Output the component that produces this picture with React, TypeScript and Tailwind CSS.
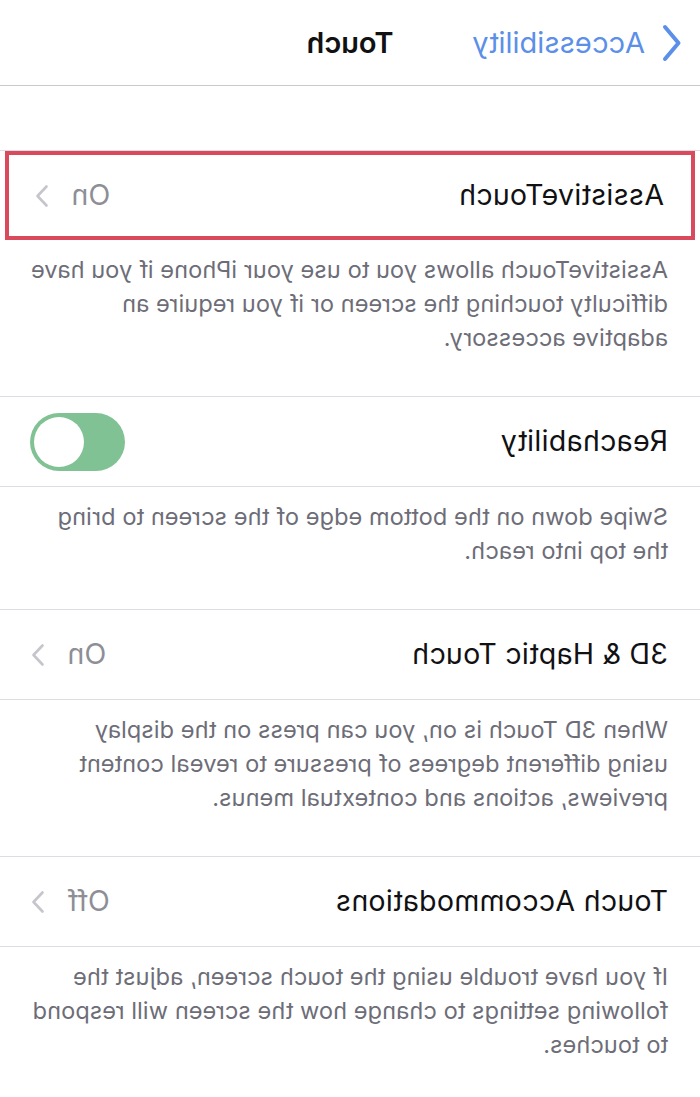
import React from "react";

function Chevron() {
  return (
    <svg width="14" height="24" viewBox="0 0 14 24" fill="none" className="shrink-0">
      <path d="M2.5 2.5 L11.5 12 L2.5 21.5" stroke="#c5c5cc" strokeWidth="2.6" strokeLinecap="round" strokeLinejoin="round" />
    </svg>
  );
}

function ValueRow({ label, value }: { label: string; value: string }) {
  return (
    <div className="flex h-full items-center pl-[32px] pr-[31px]">
      <span className="flex-1 text-[28.5px] tracking-[0.3px] text-[#111114]">{label}</span>
      <span className="text-[28.5px] tracking-[0.3px] text-[#8e8e96]">{value}</span>
      <span className="ml-[22px] flex items-center">
        <Chevron />
      </span>
    </div>
  );
}

function Footer({ lines }: { lines: string[] }) {
  return (
    <div className="whitespace-nowrap pl-[32px] pr-[20px] pt-[13px] pb-[41px] text-[23.5px] leading-[34px] tracking-[0.1px] text-[#6d6d78]">
      {lines.map((l, i) => (
        <div key={i}>{l}</div>
      ))}
    </div>
  );
}

export default function App() {
  return (
    <div className="min-h-[1097px] w-[700px] bg-white font-['Inter',sans-serif] -scale-x-100">
      <header className="grid h-[86px] grid-cols-[1fr_auto_1fr] items-center border-b border-[#c8c8ce]">
        <div className="flex items-center pl-[18px] text-[#5b8fe8]">
          <svg width="20" height="38" viewBox="0 0 20 38" fill="none">
            <path d="M17 3 L3.5 19 L17 35" stroke="#5b8fe8" strokeWidth="4" strokeLinecap="round" strokeLinejoin="round" />
          </svg>
          <span className="ml-[17px] text-[29px]">Accessibility</span>
        </div>
        <div className="text-[29px] font-semibold text-[#111114]">Touch</div>
        <div />
      </header>

      <div className="h-[64px]" />

      <div className="border-t border-[#dcdce2]">
        <div className="mx-[5px] h-[89px] border-4 border-[#d94a5c]">
          <div className="flex h-full items-center pl-[27px] pr-[26px]">
            <span className="flex-1 text-[28.5px] tracking-[0.3px] text-[#111114]">AssistiveTouch</span>
            <span className="text-[28.5px] tracking-[0.3px] text-[#8e8e96]">On</span>
            <span className="ml-[22px] flex items-center">
              <Chevron />
            </span>
          </div>
        </div>
      </div>
      <Footer
        lines={[
          "AssistiveTouch allows you to use your iPhone if you have",
          "difficulty touching the screen or if you require an",
          "adaptive accessory.",
        ]}
      />

      <div className="h-[91px] border-y border-[#dcdce2]">
        <div className="flex h-full items-center pl-[32px] pr-[30px]">
          <span className="flex-1 text-[28.5px] tracking-[0.3px] text-[#111114]">Reachability</span>
          <div className="flex h-[58px] w-[95px] items-center justify-end rounded-full bg-[#80c293] pr-[4px]">
            <div className="h-[50px] w-[50px] rounded-full bg-white" />
          </div>
        </div>
      </div>
      <Footer lines={["Swipe down on the bottom edge of the screen to bring", "the top into reach."]} />

      <div className="h-[91px] border-y border-[#dcdce2]">
        <ValueRow label="3D & Haptic Touch" value="On" />
      </div>
      <Footer
        lines={[
          "When 3D Touch is on, you can press on the display",
          "using different degrees of pressure to reveal content",
          "previews, actions and contextual menus.",
        ]}
      />

      <div className="h-[91px] border-y border-[#dcdce2]">
        <ValueRow label="Touch Accommodations" value="Off" />
      </div>
      <Footer
        lines={[
          "If you have trouble using the touch screen, adjust the",
          "following settings to change how the screen will respond",
          "to touches.",
        ]}
      />
    </div>
  );
}
